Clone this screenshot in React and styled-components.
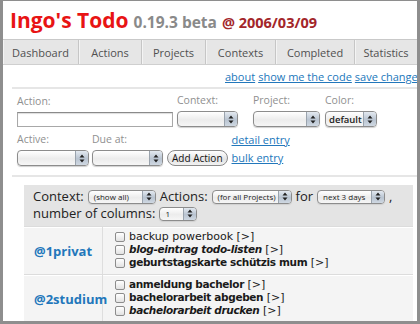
import React from 'react';
import styled, { createGlobalStyle } from 'styled-components';

const GlobalStyle = createGlobalStyle`
  html, body {
    margin: 0;
    padding: 0;
    background: #ffffff;
  }
  body {
    font-family: "Open Sans", "DejaVu Sans", sans-serif;
    color: #222222;
  }
`;

const Frame = styled.div`
  width: 420px;
  height: 324px;
  box-sizing: border-box;
  border: 3px solid #8e8e8e;
  border-top-width: 1px;
  overflow: hidden;
  background: #ffffff;
`;

const Header = styled.h1`
  margin: 0;
  height: 38px;
  box-sizing: border-box;
  padding: 7px 0 0 7px;
  display: flex;
  align-items: baseline;
  gap: 5px;
  white-space: nowrap;
  font-size: 21px;
  font-weight: 700;
  line-height: 24px;
  color: #e81414;
`;

const Version = styled.span`
  font-size: 15.5px;
  color: #8a8a8a;
`;

const Stamp = styled.span`
  font-size: 14.5px;
  color: #a3262a;
`;

const TabBar = styled.nav`
  display: flex;
  height: 26px;
  box-sizing: border-box;
  background: #e6e6e6;
  border-top: 1px solid #c9c9c9;
  border-bottom: 1px solid #cfcfcf;
`;

const Tab = styled.a`
  flex: ${(p) => (p.$w ? `0 0 ${p.$w}px` : '1')};
  display: flex;
  align-items: center;
  justify-content: center;
  border-right: ${(p) => (p.$w ? '1px solid #c6c6c6' : '0')};
  box-shadow: inset 1px 0 0 #f4f4f4;
  font-size: 11px;
  color: #505050;
  white-space: nowrap;
`;

const LinkBar = styled.div`
  height: 22px;
  display: flex;
  align-items: center;
  gap: 3px;
  padding-left: 222px;
  white-space: nowrap;
  overflow: hidden;
`;

const TextLink = styled.a`
  color: #2277bb;
  text-decoration: underline;
  font-size: ${(p) => p.$fs || 11}px;
  white-space: nowrap;
`;

const Rule = styled.hr`
  margin: ${(p) => p.$mt || 0}px 0 0 9px;
  border: 0;
  border-top: 2px solid #e6e6e6;
`;

const Form = styled.form`
  padding: 5px 0 0 14px;
  display: flex;
  flex-direction: column;
  gap: 5px;
`;

const FormRow = styled.div`
  display: flex;
  align-items: flex-end;
`;

const Field = styled.label`
  display: flex;
  flex-direction: column;
  gap: 4px;
  width: ${(p) => p.$w}px;
  flex: 0 0 auto;
`;

const FieldLabel = styled.span`
  font-size: 10.5px;
  line-height: 13px;
  color: #909090;
`;

const TextInput = styled.div`
  width: ${(p) => p.$w}px;
  height: 15px;
  box-sizing: border-box;
  border: 1px solid #a8a8a8;
  border-top-color: #8a8a8a;
  box-shadow: inset 0 1px 1px #dddddd;
  background: #ffffff;
`;

const SelectBox = styled.div`
  display: inline-flex;
  align-items: stretch;
  box-sizing: border-box;
  width: ${(p) => p.$w}px;
  height: ${(p) => p.$h || 16}px;
  border: 1px solid #8c8c8c;
  border-radius: 4px;
  background: linear-gradient(#ffffff, #ececec 55%, #f6f6f6);
  box-shadow: 0 1px 1px #d0d0d0;
  overflow: hidden;
  vertical-align: middle;
`;

const SelectText = styled.span`
  flex: 1;
  display: flex;
  align-items: center;
  padding-left: ${(p) => p.$pl || 5}px;
  font-size: ${(p) => p.$fs || 11}px;
  font-weight: ${(p) => (p.$bold ? 600 : 400)};
  color: #222222;
  white-space: nowrap;
  overflow: hidden;
`;

const ArrowCap = styled.span`
  flex: 0 0 12px;
  display: flex;
  align-items: center;
  justify-content: center;
  border-left: 1px solid #9aa3ad;
  background: linear-gradient(#e3e9f0, #b9c4d1 55%, #cfd8e2);
`;

const Select = ({ w, h, fs, bold, pl, children }) => (
  <SelectBox $w={w} $h={h}>
    <SelectText $fs={fs} $bold={bold} $pl={pl}>
      {children}
    </SelectText>
    <ArrowCap>
      <svg width="6" height="9" viewBox="0 0 6 9">
        <path d="M3 0.5 L5.5 3.5 H0.5 Z M3 8.5 L5.5 5.5 H0.5 Z" fill="#222" />
      </svg>
    </ArrowCap>
  </SelectBox>
);

const Button = styled.button`
  height: 16px;
  margin-left: 4px;
  padding: 0 4px;
  box-sizing: border-box;
  border: 1px solid #8a8a8a;
  border-radius: 8px;
  background: linear-gradient(#ffffff, #e4e4e4 60%, #f2f2f2);
  font-family: inherit;
  font-size: 10px;
  line-height: 12px;
  color: #111111;
  white-space: nowrap;
`;

const EntryLinks = styled.div`
  display: flex;
  flex-direction: column;
  gap: 3px;
  margin-left: 4px;
  padding-bottom: 1px;
`;

const FilterBox = styled.div`
  margin: 8px 4px 0 21px;
  padding: 3px 0 4px 9px;
  background: #e4e4e4;
  font-size: 13px;
  line-height: 17px;
  color: #222222;
`;

const FilterLine = styled.div`
  display: flex;
  align-items: center;
  gap: 4px;
  white-space: nowrap;
`;

const ContextRow = styled.div`
  display: grid;
  grid-template-columns: 79px 1fr;
  margin: 0 4px 0 21px;
  background: #f4f4f4;
  border-top: 1px solid #dcdcdc;
  box-shadow: inset 0 1px 0 #ffffff;
`;

const ContextName = styled.a`
  display: flex;
  align-items: center;
  padding-left: 10px;
  border-right: 1px solid #dedede;
  font-size: 13px;
  font-weight: 700;
  color: #2277bb;
`;

const Items = styled.ul`
  list-style: none;
  margin: 0;
  padding: 3px 0 5px 12px;
`;

const Item = styled.li`
  display: flex;
  align-items: center;
  gap: 4px;
  height: 13px;
  font-family: "DejaVu Sans", sans-serif;
  font-size: 11px;
  line-height: 13px;
  color: #1a1a1a;
  white-space: nowrap;
`;

const Check = styled.span`
  flex: 0 0 10px;
  height: 10px;
  box-sizing: border-box;
  border: 1px solid #8c8c8c;
  border-radius: 2px;
  background: linear-gradient(#ffffff, #e2e2e2);
`;

const ItemTitle = styled.span`
  font-weight: ${(p) => (p.$bold ? 700 : 400)};
  font-style: ${(p) => (p.$italic ? 'italic' : 'normal')};
  font-size: ${(p) => (p.$bold ? '10.5px' : 'inherit')};
  letter-spacing: ${(p) => (p.$bold ? '-0.35px' : '0')};
`;

const tabs = [
  ['Dashboard', 75],
  ['Actions', 62],
  ['Projects', 63],
  ['Contexts', 69],
  ['Completed', 78],
  ['Statistics', 0],
];

const contexts = [
  {
    name: '@1privat',
    items: [
      { title: 'backup powerbook' },
      { title: 'blog-eintrag todo-listen', bold: true, italic: true },
      { title: 'geburtstagskarte schützis mum', bold: true },
    ],
  },
  {
    name: '@2studium',
    items: [
      { title: 'anmeldung bachelor', bold: true },
      { title: 'bachelorarbeit abgeben', bold: true },
      { title: 'bachelorarbeit drucken', bold: true, italic: true },
    ],
  },
];

export default function App() {
  return (
    <Frame>
      <GlobalStyle />
      <Header>
        Ingo's Todo
        <Version>0.19.3 beta</Version>
        <Stamp>@ 2006/03/09</Stamp>
      </Header>

      <TabBar>
        {tabs.map(([label, w]) => (
          <Tab key={label} $w={w}>
            {label}
          </Tab>
        ))}
      </TabBar>

      <LinkBar>
        <TextLink>about</TextLink>
        <TextLink>show me the code</TextLink>
        <TextLink>save changes</TextLink>
      </LinkBar>
      <Rule />

      <Form>
        <FormRow>
          <Field $w={160}>
            <FieldLabel>Action:</FieldLabel>
            <TextInput $w={156} />
          </Field>
          <Field $w={76}>
            <FieldLabel>Context:</FieldLabel>
            <Select w={61} />
          </Field>
          <Field $w={72}>
            <FieldLabel>Project:</FieldLabel>
            <Select w={67} />
          </Field>
          <Field $w={60}>
            <FieldLabel>Color:</FieldLabel>
            <Select w={52} fs={9.5} pl={3} bold>
              default
            </Select>
          </Field>
        </FormRow>
        <FormRow>
          <Field $w={75}>
            <FieldLabel>Active:</FieldLabel>
            <Select w={72} />
          </Field>
          <Field $w={71}>
            <FieldLabel>Due at:</FieldLabel>
            <Select w={71} />
          </Field>
          <Button type="button">Add Action</Button>
          <EntryLinks>
            <TextLink>detail entry</TextLink>
            <TextLink>bulk entry</TextLink>
          </EntryLinks>
        </FormRow>
      </Form>
      <Rule $mt={9} />

      <FilterBox>
        <FilterLine>
          Context:
          <Select w={68} h={14} fs={8}>
            (show all)
          </Select>
          Actions:
          <Select w={80} h={14} fs={8}>
            (for all Projects)
          </Select>
          for
          <Select w={68} h={14} fs={8}>
            next 3 days
          </Select>
          ,
        </FilterLine>
        <FilterLine>
          number of columns:
          <Select w={38} h={14} fs={8}>
            1
          </Select>
        </FilterLine>
      </FilterBox>

      {contexts.map((ctx) => (
        <ContextRow key={ctx.name}>
          <ContextName>{ctx.name}</ContextName>
          <Items>
            {ctx.items.map((item) => (
              <Item key={item.title}>
                <Check />
                <span>
                  <ItemTitle $bold={item.bold} $italic={item.italic}>
                    {item.title}
                  </ItemTitle>{' '}
                  [&gt;]
                </span>
              </Item>
            ))}
          </Items>
        </ContextRow>
      ))}
    </Frame>
  );
}
